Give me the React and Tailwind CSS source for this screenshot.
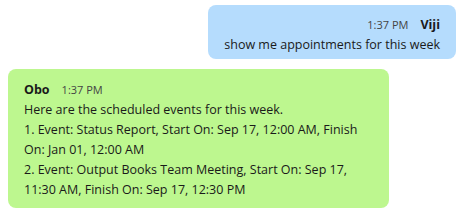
export default function App() {
  return (
    <div className="w-[462px] h-[216px] bg-white flex flex-col pt-[5px] text-[#1a1a1a]">
      <div className="flex justify-end pr-[6px]">
        <div className="bg-[#b5dcfd] rounded-[8px] pl-[16px] pr-[16px] pt-[10px] pb-[4px] font-['Open_Sans',sans-serif] text-[12.5px] leading-[20px]">
          <div className="flex justify-end items-center gap-[12px]">
            <span className="text-[11px] text-[#444]">1:37 PM</span>
            <span className="font-bold">Viji</span>
          </div>
          <div className="whitespace-nowrap">show me appointments for this week</div>
        </div>
      </div>
      <div className="flex pl-[8px] mt-[10px]">
        <div className="bg-[#bdf78f] rounded-[8px] w-[381px] pl-[16px] pr-[16px] pt-[11px] pb-[8px] font-['Open_Sans',sans-serif] text-[12.5px] leading-[20px]">
          <div className="flex items-center gap-[12px]">
            <span className="font-bold">Obo</span>
            <span className="text-[11px] text-[#444]">1:37 PM</span>
          </div>
          <div className="whitespace-nowrap">Here are the scheduled events for this week.</div>
          <div className="whitespace-nowrap">1. Event: Status Report, Start On: Sep 17, 12:00 AM, Finish</div>
          <div className="whitespace-nowrap">On: Jan 01, 12:00 AM</div>
          <div className="whitespace-nowrap">2. Event: Output Books Team Meeting, Start On: Sep 17,</div>
          <div className="whitespace-nowrap">11:30 AM, Finish On: Sep 17, 12:30 PM</div>
        </div>
      </div>
    </div>
  );
}
